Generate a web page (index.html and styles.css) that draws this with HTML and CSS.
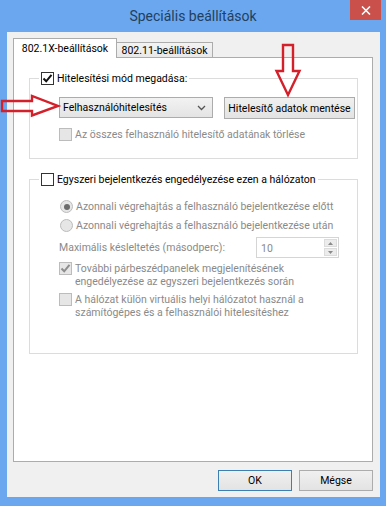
FILE: index.html
```html
<!DOCTYPE html>
<html lang="hu">
<head>
    <meta charset="UTF-8">
    <title>Speciális beállítások</title>
    <link rel="stylesheet" href="styles.css">
</head>
<body>
    <div class="window">
        <div class="titlebar">
            <span></span>
            <span class="title">Speciális beállítások</span>
            <span class="close">
                <svg width="10" height="9" viewBox="0 0 10 9"><path d="M1 0.5 L9 8.5 M9 0.5 L1 8.5" stroke="#fff" stroke-width="1.6" fill="none"/></svg>
            </span>
        </div>

        <div class="client">
            <div class="tabs">
                <div class="tab active">802.1X-beállítások</div>
                <div class="tab">802.11-beállítások</div>
            </div>

            <div class="panel">
                <div class="group group-auth">
                    <div class="group-head">
                        <span class="cb checked">
                            <svg width="11" height="11" viewBox="0 0 11 11"><path d="M1.5 5.5 L4.2 8.3 L9.5 1.8" stroke="#111" stroke-width="2" fill="none"/></svg>
                        </span>
                        <span>Hitelesítési mód megadása:</span>
                    </div>
                    <div class="auth-row">
                        <div class="select">
                            <span>Felhasználóhitelesítés</span>
                            <svg width="9" height="6" viewBox="0 0 9 6"><path d="M1 1 L4.5 4.5 L8 1" stroke="#555" stroke-width="1.3" fill="none"/></svg>
                        </div>
                        <div class="button wide">Hitelesítő adatok mentése</div>
                    </div>
                    <div class="opt disabled clear-row">
                        <span class="cb"></span>
                        <span>Az összes felhasználó hitelesítő adatának törlése</span>
                    </div>
                </div>

                <div class="group group-sso">
                    <div class="group-head">
                        <span class="cb"></span>
                        <span>Egyszeri bejelentkezés engedélyezése ezen a hálózaton</span>
                    </div>
                    <div class="opt disabled radio-first">
                        <span class="radio on"></span>
                        <span>Azonnali végrehajtás a felhasználó bejelentkezése előtt</span>
                    </div>
                    <div class="opt disabled radio-second">
                        <span class="radio"></span>
                        <span>Azonnali végrehajtás a felhasználó bejelentkezése után</span>
                    </div>
                    <div class="delay-row disabled">
                        <span>Maximális késleltetés (másodperc):</span>
                        <div class="spin">
                            <span class="spin-value">10</span>
                            <span class="spin-buttons">
                                <span class="spin-btn"><svg width="5" height="3" viewBox="0 0 5 3"><path d="M0 3 L2.5 0 L5 3 Z" fill="#8a8a8a"/></svg></span>
                                <span class="spin-btn"><svg width="5" height="3" viewBox="0 0 5 3"><path d="M0 0 L2.5 3 L5 0 Z" fill="#8a8a8a"/></svg></span>
                            </span>
                        </div>
                    </div>
                    <div class="opt disabled multi dialogs-row">
                        <span class="cb checked">
                            <svg width="11" height="11" viewBox="0 0 11 11"><path d="M1.5 5.5 L4.2 8.3 L9.5 1.8" stroke="#8d8d8d" stroke-width="2" fill="none"/></svg>
                        </span>
                        <span>További párbeszédpanelek megjelenítésének<br>engedélyezése az egyszeri bejelentkezés során</span>
                    </div>
                    <div class="opt disabled multi vlan-row">
                        <span class="cb"></span>
                        <span>A hálózat külön virtuális helyi hálózatot használ a<br>számítógépes és a felhasználói hitelesítéshez</span>
                    </div>
                </div>
            </div>

            <div class="actions">
                <div class="button default">OK</div>
                <div class="button">Mégse</div>
            </div>
        </div>

        <svg class="marks" width="386" height="506" viewBox="0 0 386 506">
            <path d="M283 45 L293 45 L293 71 L299.5 71 L288 95 L276.5 71 L283 71 Z" stroke="#d3202a" stroke-width="2.4" fill="none" stroke-linejoin="miter"/>
            <path d="M2 101 L32 101 L32 96 L58 106 L32 115.5 L32 111 L2 111 Z" stroke="#d3202a" stroke-width="2.4" fill="none" stroke-linejoin="miter"/>
        </svg>
    </div>
</body>
</html>
```

FILE: styles.css
```css
* {
    box-sizing: border-box;
}
body {
    margin: 0;
    width: 386px;
    height: 506px;
    overflow: hidden;
    background-color: #6aa7ef;
    font-family: Roboto, "Noto Sans", sans-serif;
    font-size: 10.5px;
    line-height: 13px;
    color: #000;
    white-space: nowrap;
}
.window {
    position: relative;
    height: 506px;
    display: flex;
    flex-direction: column;
}
.titlebar {
    height: 32px;
    display: grid;
    grid-template-columns: 1fr auto 1fr;
    align-items: start;
}
.title {
    font-size: 14px;
    line-height: 32px;
    color: #233f5e;
}
.close {
    justify-self: end;
    margin-right: 5px;
    width: 31px;
    height: 20px;
    background-color: #c9504b;
    display: flex;
    align-items: center;
    justify-content: center;
}
.client {
    flex: 1;
    margin: 0 6px 9px 7px;
    padding: 6px 7px 0 6px;
    background-color: #f0f0f0;
}
.tabs {
    display: flex;
    align-items: flex-end;
    height: 19px;
    position: relative;
    z-index: 1;
}
.tab {
    height: 15px;
    width: 97px;
    margin-left: -1px;
    border: 1px solid #acacac;
    border-bottom: none;
    background: linear-gradient(#f3f3f3, #e9e9e9);
    display: flex;
    align-items: center;
    justify-content: center;
    padding-top: 1px;
}
.tab.active {
    height: 20px;
    width: 104px;
    margin-left: 0;
    margin-bottom: -1px;
    background: #fff;
    padding-top: 0;
    padding-bottom: 1px;
}
.panel {
    height: 405px;
    background-color: #fff;
    border: 1px solid #acacac;
    padding: 0 14px 0 15px;
}
.group {
    border: 1px solid #dcdcdc;
    padding-left: 29px;
    margin-top: 20px;
}
.group-auth {
    padding-bottom: 17px;
}
.group-sso {
    padding-bottom: 34px;
}
.group-head {
    display: flex;
    align-items: center;
    gap: 3px;
    width: max-content;
    height: 13px;
    margin: -7px 0 0 -20px;
    padding: 0 2px;
    background-color: #fff;
}
.cb {
    width: 13px;
    height: 13px;
    flex: none;
    border: 1px solid #333;
    background-color: #fff;
    display: flex;
    align-items: center;
    justify-content: center;
}
.disabled {
    color: #8a8a8a;
}
.disabled .cb {
    border-color: #bcbcbc;
    background-color: #e6e6e6;
}
.radio {
    width: 13px;
    height: 13px;
    flex: none;
    border: 1px solid #bcbcbc;
    border-radius: 50%;
    background-color: #e6e6e6;
    display: flex;
    align-items: center;
    justify-content: center;
}
.radio.on:after {
    content: "";
    width: 6px;
    height: 6px;
    border-radius: 50%;
    background-color: #6b6b6b;
}
.opt {
    display: flex;
    align-items: flex-start;
    gap: 3px;
}
.auth-row {
    display: flex;
    align-items: flex-start;
    gap: 11px;
    margin-top: 12px;
}
.select {
    width: 154px;
    height: 21px;
    border: 1px solid #acacac;
    background: linear-gradient(#f2f2f2, #e4e4e4);
    display: flex;
    align-items: center;
    justify-content: space-between;
    padding: 0 6px 0 3px;
}
.button {
    height: 21px;
    width: 74px;
    border: 1px solid #acacac;
    background: linear-gradient(#f0f0f0, #e3e3e3);
    display: flex;
    align-items: center;
    justify-content: center;
}
.button.wide {
    width: 131px;
    height: 22px;
}
.button.default {
    border-color: #3c7fb1;
}
.clear-row {
    margin-top: 9px;
}
.radio-first {
    margin-top: 14px;
    margin-left: 1px;
}
.radio-second {
    margin-top: 6px;
    margin-left: 1px;
}
.delay-row {
    display: flex;
    align-items: center;
    justify-content: space-between;
    width: 280px;
    margin-top: 5px;
}
.spin {
    width: 83px;
    height: 21px;
    border: 1px solid #d5d5d5;
    background-color: #fff;
    display: flex;
    align-items: stretch;
    justify-content: space-between;
    padding: 1px 1px 1px 4px;
}
.spin-value {
    align-self: center;
    padding-top: 2px;
}
.spin-buttons {
    width: 13px;
    display: flex;
    flex-direction: column;
    gap: 1px;
}
.spin-btn {
    flex: 1;
    background-color: #ececec;
    border: 1px solid #dcdcdc;
    display: flex;
    align-items: center;
    justify-content: center;
}
.dialogs-row {
    margin-top: 4px;
}
.vlan-row {
    margin-top: 5px;
}
.actions {
    display: flex;
    justify-content: flex-end;
    gap: 7px;
    margin-top: 8px;
}
.marks {
    position: absolute;
    top: 0;
    left: 0;
    pointer-events: none;
}
```
